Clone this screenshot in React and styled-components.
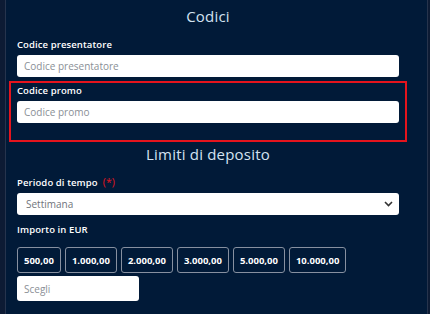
import React, { useState } from 'react';
import styled, { createGlobalStyle } from 'styled-components';

const GlobalStyle = createGlobalStyle`
  html, body {
    margin: 0;
    padding: 0;
    background: #0c1a33;
  }
  * {
    box-sizing: border-box;
  }
`;

const Page = styled.div`
  width: 430px;
  height: 314px;
  overflow: hidden;
  padding-left: 5px;
  padding-right: 2px;
  background: #0d1b34;
  font-family: 'Open Sans', 'Liberation Sans', sans-serif;
`;

const Panel = styled.div`
  height: 100%;
  background: #011a38;
  border-left: 1px solid #26344d;
  border-right: 1px solid #26344d;
  padding: 3px 20px 0 3px;
`;

const Title = styled.h2`
  margin: 0;
  height: 26px;
  line-height: 26px;
  text-align: center;
  font-size: 15px;
  font-weight: 400;
  color: #d3e2f1;
  letter-spacing: 0.2px;
  margin-top: ${({ $top }) => $top || 0}px;
`;

const Group = styled.div`
  padding: ${({ $highlight }) => ($highlight ? '1px 6px 17px 6px' : '0 8px')};
  border: ${({ $highlight }) => ($highlight ? '2px solid #e5141d' : 'none')};
  margin-top: ${({ $top }) => $top || 0}px;
`;

const Label = styled.label`
  display: block;
  font-size: 9.5px;
  font-weight: 600;
  color: #ffffff;
  line-height: 13px;
  margin-bottom: 4px;
  letter-spacing: 0.1px;
`;

const Required = styled.span`
  color: #e5141d;
  margin-left: 5px;
  font-weight: 400;
  font-size: 10.5px;
`;

const TextInput = styled.input`
  display: block;
  width: ${({ $w }) => ($w ? `${$w}px` : '100%')};
  height: ${({ $h }) => $h || 22}px;
  border: none;
  border-radius: 3px;
  background: #ffffff;
  padding: 0 7px;
  font-family: inherit;
  font-size: 10px;
  color: #333;
  outline: none;

  &::placeholder {
    color: #8a8f96;
  }
`;

const SelectWrap = styled.div`
  position: relative;
`;

const Select = styled.select`
  display: block;
  width: 100%;
  height: 22px;
  border: none;
  border-radius: 3px;
  background: #ffffff;
  padding: 0 9px;
  font-family: inherit;
  font-size: 10px;
  color: #6f747b;
  appearance: none;
  outline: none;
`;

const Chevron = styled.svg`
  position: absolute;
  right: 6px;
  top: 8px;
  pointer-events: none;
`;

const AmountRow = styled.div`
  display: flex;
  gap: 4px;
  margin-top: 11px;
`;

const AmountButton = styled.button`
  height: 26px;
  padding: 0 6px;
  background: #011a38;
  border: 1px solid #8790a0;
  border-radius: 3px;
  color: #ffffff;
  font-family: inherit;
  font-size: 9.5px;
  font-weight: 700;
  cursor: pointer;
`;

const ChooseRow = styled.div`
  margin-top: 3px;
`;

const amounts = ['500,00', '1.000,00', '2.000,00', '3.000,00', '5.000,00', '10.000,00'];

export default function App() {
  const [period, setPeriod] = useState('settimana');

  return (
    <>
      <GlobalStyle />
      <Page>
        <Panel>
          <Title>Codici</Title>
          <Group $top={9}>
            <Label>Codice presentatore</Label>
            <TextInput placeholder="Codice presentatore" />
          </Group>
          <Group $highlight $top={4}>
            <Label>Codice promo</Label>
            <TextInput placeholder="Codice promo" />
          </Group>
          <Title $top={-1}>Limiti di deposito</Title>
          <Group $top={9}>
            <Label>
              Periodo di tempo<Required>(*)</Required>
            </Label>
            <SelectWrap>
              <Select value={period} onChange={(e) => setPeriod(e.target.value)}>
                <option value="giorno">Giorno</option>
                <option value="settimana">Settimana</option>
                <option value="mese">Mese</option>
              </Select>
              <Chevron width="9" height="6" viewBox="0 0 9 6">
                <path d="M1 1l3.5 3.5L8 1" fill="none" stroke="#333" strokeWidth="1.6" />
              </Chevron>
            </SelectWrap>
          </Group>
          <Group $top={8}>
            <Label>Importo in EUR</Label>
            <AmountRow>
              {amounts.map((a) => (
                <AmountButton key={a}>{a}</AmountButton>
              ))}
            </AmountRow>
            <ChooseRow>
              <TextInput placeholder="Scegli" $w={122} $h={25} />
            </ChooseRow>
          </Group>
        </Panel>
      </Page>
    </>
  );
}
